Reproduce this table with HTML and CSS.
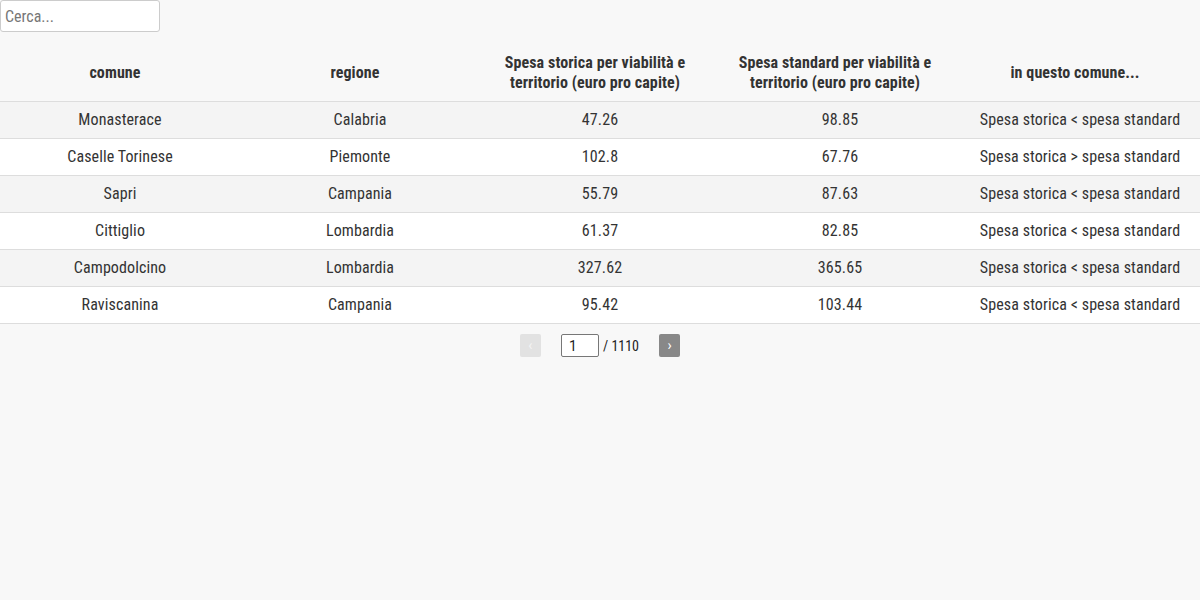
FILE: index.html
```html
<!DOCTYPE html>
<html lang="it">
<head>
<meta charset="utf-8">
<link rel="stylesheet" href="styles.css">
</head>
<body>
<div class="app">
  <input class="search" type="text" placeholder="Cerca...">
  <table class="data">
    <thead>
      <tr>
        <th>comune</th>
        <th>regione</th>
        <th>Spesa storica per viabilità e territorio (euro pro capite)</th>
        <th>Spesa standard per viabilità e territorio (euro pro capite)</th>
        <th>in questo comune...</th>
      </tr>
    </thead>
    <tbody>
      <tr><td>Monasterace</td><td>Calabria</td><td>47.26</td><td>98.85</td><td>Spesa storica &lt; spesa standard</td></tr>
      <tr><td>Caselle Torinese</td><td>Piemonte</td><td>102.8</td><td>67.76</td><td>Spesa storica &gt; spesa standard</td></tr>
      <tr><td>Sapri</td><td>Campania</td><td>55.79</td><td>87.63</td><td>Spesa storica &lt; spesa standard</td></tr>
      <tr><td>Cittiglio</td><td>Lombardia</td><td>61.37</td><td>82.85</td><td>Spesa storica &lt; spesa standard</td></tr>
      <tr><td>Campodolcino</td><td>Lombardia</td><td>327.62</td><td>365.65</td><td>Spesa storica &lt; spesa standard</td></tr>
      <tr><td>Raviscanina</td><td>Campania</td><td>95.42</td><td>103.44</td><td>Spesa storica &lt; spesa standard</td></tr>
    </tbody>
  </table>
  <div class="pager">
    <button class="pbtn disabled" type="button">‹</button>
    <input class="page-input" type="text" value="1">
    <span class="total">/ 1110</span>
    <button class="pbtn active" type="button">›</button>
  </div>
</div>
</body>
</html>
```
FILE: styles.css
```css
html, body {
  margin: 0;
  padding: 0;
  background: #f8f8f8;
}
body {
  font-family: "Roboto Condensed", Roboto, sans-serif;
  color: #333;
  font-size: 16px;
}
.app {
  display: flex;
  flex-direction: column;
}
.search {
  width: 160px;
  height: 32px;
  box-sizing: border-box;
  margin: 0;
  padding: 0 4px;
  border: 1px solid #ccc;
  border-radius: 3px;
  background: #fff;
  font-family: "Roboto Condensed", Roboto, sans-serif;
  font-size: 16px;
  color: #333;
}
.search::placeholder {
  color: #777;
}
.data {
  margin-top: 10px;
  width: 100%;
  border-collapse: collapse;
  table-layout: fixed;
}
.data th {
  font-weight: 700;
  font-size: 16px;
  line-height: 20px;
  padding: 11px 20px 8px 10px;
  text-align: center;
  vertical-align: middle;
  border-bottom: 1px solid #ddd;
  color: #333;
  letter-spacing: 0.1px;
}
.data td {
  text-align: center;
  font-size: 16px;
  line-height: 20px;
  padding: 8px 10px;
  border-bottom: 1px solid #ddd;
  color: #333;
  letter-spacing: 0.1px;
}
.data tbody tr:nth-child(odd) {
  background: #f4f4f4;
}
.data tbody tr:nth-child(even) {
  background: #fff;
}
.pager {
  margin-top: 10px;
  display: flex;
  justify-content: center;
  align-items: center;
  font-family: "Roboto Condensed", Roboto, sans-serif;
  font-size: 14px;
  color: #222;
}
.pbtn {
  width: 21px;
  height: 23px;
  padding: 0;
  border: 0;
  border-radius: 2px;
  color: #fff;
  font-size: 14px;
  line-height: 23px;
  font-family: Roboto, sans-serif;
}
.pbtn.disabled {
  background: #e2e2e2;
  color: #f4f4f4;
}
.pbtn.active {
  background: #888;
}
.page-input {
  width: 38px;
  height: 23px;
  box-sizing: border-box;
  margin: 0 4px 0 20px;
  padding: 0 0 0 7px;
  border: 1px solid #777;
  border-radius: 2px;
  background: #fff;
  font-family: Roboto, sans-serif;
  font-size: 14px;
  color: #222;
}
.total {
  margin-right: 20px;
}
```
